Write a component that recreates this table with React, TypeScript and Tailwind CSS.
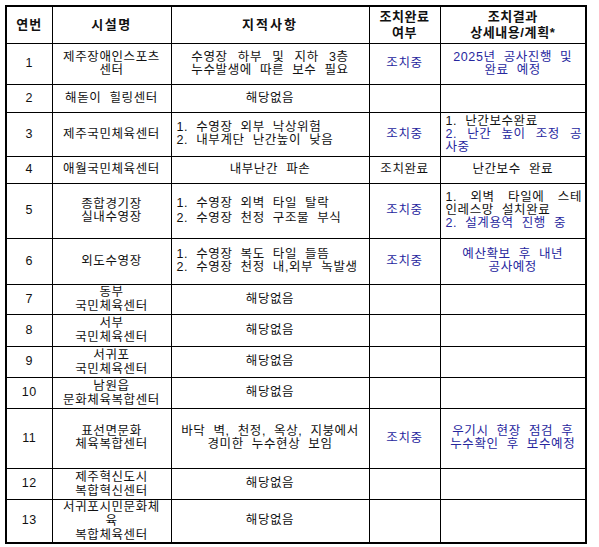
import React from "react";

const BLUE = "text-[#27279e]";

function C({ children, align = "center", lead = "leading-[13px]", className = "" }: { children?: React.ReactNode; align?: "center" | "left"; lead?: string; className?: string }) {
  return (
    <td
      className={`border border-black align-middle p-0 ${align === "center" ? "text-center" : "text-left pl-[5px] pr-[3px]"} ${lead} ${className}`}
    >
      {children}
    </td>
  );
}

function L({ children, j = false, className = "" }: { children: React.ReactNode; j?: boolean; className?: string }) {
  return <div className={`${j ? "text-justify [text-align-last:justify]" : ""} ${className}`}>{children}</div>;
}

export default function App() {
  const none = "해당없음";
  return (
    <div className="bg-white w-[599px] h-[547px] p-[5px]" style={{ fontFamily: '"Liberation Sans", "Noto Sans CJK KR", sans-serif' }}>
      <table className="table-fixed border-collapse border-[2px] border-black w-[580px] text-[12.5px] tracking-[0.6px] [word-spacing:4px] text-[#111]">
        <colgroup>
          <col className="w-[46px]" />
          <col className="w-[119px]" />
          <col className="w-[198px]" />
          <col className="w-[71px]" />
          <col className="w-[146px]" />
        </colgroup>
        <tbody>
          <tr className="h-[37px] font-bold text-[13px]">
            <C className="tracking-[1px]">연번</C>
            <C className="tracking-[1.5px]">시설명</C>
            <C className="tracking-[2px]">지적사항</C>
            <C lead="leading-[16px]">조치완료<br />여부</C>
            <C lead="leading-[16px]">조치결과<br />상세내용/계획*</C>
          </tr>
          <tr className="h-[41px]">
            <C>1</C>
            <C>제주장애인스포츠<br />센터</C>
            <C>
              <div className="inline-block">
                <L j>수영장 하부 및 지하 3층</L>
                <L j>누수발생에 따른 보수 필요</L>
              </div>
            </C>
            <C className={BLUE}>조치중</C>
            <C className={BLUE}>2025년 공사진행 및<br />완료 예정</C>
          </tr>
          <tr className="h-[28px]">
            <C>2</C>
            <C>해돋이 힐링센터</C>
            <C>{none}</C>
            <C />
            <C />
          </tr>
          <tr className="h-[44px]">
            <C>3</C>
            <C>제주국민체육센터</C>
            <C align="left">1. 수영장 외부 낙상위험<br />2. 내부계단 난간높이 낮음</C>
            <C className={BLUE}>조치중</C>
            <C align="left">
              <L>1. 난간보수완료</L>
              <L j className={BLUE}>2. 난간 높이 조정 공</L>
              <L className={BLUE}>사중</L>
            </C>
          </tr>
          <tr className="h-[27px]">
            <C>4</C>
            <C>애월국민체육센터</C>
            <C>내부난간 파손</C>
            <C>조치완료</C>
            <C>난간보수 완료</C>
          </tr>
          <tr className="h-[55px]">
            <C>5</C>
            <C>종합경기장<br />실내수영장</C>
            <C align="left" lead="leading-[15px]">1. 수영장 외벽 타일 탈락<br />2. 수영장 천정 구조물 부식</C>
            <C className={BLUE}>조치중</C>
            <C align="left">
              <L j>1. 외벽 타일에 스테</L>
              <L>인레스망 설치완료</L>
              <L className={BLUE}>2. 설계용역 진행 중</L>
            </C>
          </tr>
          <tr className="h-[46px]">
            <C>6</C>
            <C>외도수영장</C>
            <C align="left">1. 수영장 복도 타일 들뜸<br />2. 수영장 천정 내,외부 녹발생</C>
            <C className={BLUE}>조치중</C>
            <C className={BLUE}>예산확보 후 내년<br />공사예정</C>
          </tr>
          <tr className="h-[30px]">
            <C>7</C>
            <C lead="leading-[14px]">동부<br />국민체육센터</C>
            <C>{none}</C>
            <C />
            <C />
          </tr>
          <tr className="h-[32px]">
            <C>8</C>
            <C lead="leading-[14px]">서부<br />국민체육센터</C>
            <C>{none}</C>
            <C />
            <C />
          </tr>
          <tr className="h-[31px]">
            <C>9</C>
            <C lead="leading-[14px]">서귀포<br />국민체육센터</C>
            <C>{none}</C>
            <C />
            <C />
          </tr>
          <tr className="h-[31px]">
            <C>10</C>
            <C lead="leading-[14px]">남원읍<br />문화체육복합센터</C>
            <C>{none}</C>
            <C />
            <C />
          </tr>
          <tr className="h-[60px]">
            <C>11</C>
            <C>표선면문화<br />체육복합센터</C>
            <C>바닥 벽, 천정, 옥상, 지붕에서<br />경미한 누수현상 보임</C>
            <C className={BLUE}>조치중</C>
            <C className={BLUE}>우기시 현장 점검 후<br />누수확인 후 보수예정</C>
          </tr>
          <tr className="h-[31px]">
            <C>12</C>
            <C lead="leading-[14px]">제주혁신도시<br />복합혁신센터</C>
            <C>{none}</C>
            <C />
            <C />
          </tr>
          <tr className="h-[44px]">
            <C>13</C>
            <C lead="leading-[14px]">서귀포시민문화체<br />육<br />복합체육센터</C>
            <C>{none}</C>
            <C />
            <C />
          </tr>
        </tbody>
      </table>
    </div>
  );
}
